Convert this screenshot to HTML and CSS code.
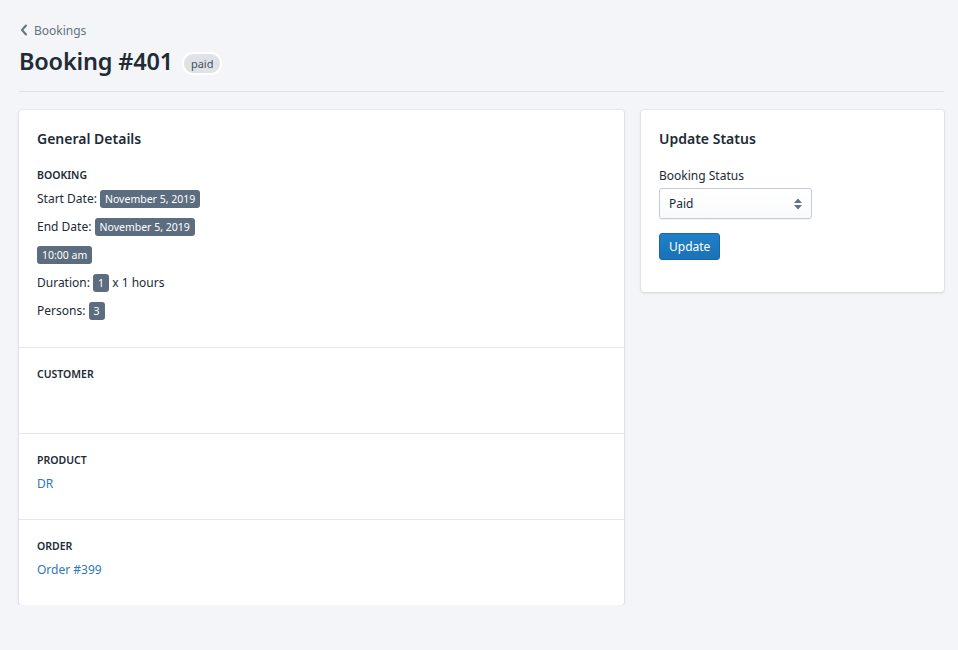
FILE: index.html
```html
<!doctype html>
<html lang="en">

<head>
    <meta charset="UTF-8">
    <title>Booking #401</title>
    <link rel="stylesheet" href="styles.css">
</head>

<body>
    <div class="page">
        <div class="header">
            <a class="crumb" href="#">
                <svg width="8" height="12" viewBox="0 0 8 12"><path d="M6 1.5 L2 6 L6 10.5" fill="none" stroke="#637381" stroke-width="2" stroke-linecap="round" stroke-linejoin="round"/></svg>
                <span>Bookings</span>
            </a>
            <div class="title-row">
                <h1>Booking #401</h1>
                <span class="badge">paid</span>
            </div>
        </div>

        <div class="layout">
            <div class="card main">
                <div class="section">
                    <h2>General Details</h2>
                    <h3>BOOKING</h3>
                    <div class="row">Start Date: <span class="tag">November 5, 2019</span></div>
                    <div class="row">End Date: <span class="tag">November 5, 2019</span></div>
                    <div class="row"><span class="tag">10:00 am</span></div>
                    <div class="row">Duration: <span class="tag">1</span> x 1 hours</div>
                    <div class="row">Persons: <span class="tag">3</span></div>
                </div>
                <div class="section">
                    <h3>CUSTOMER</h3>
                    <div class="blank"></div>
                </div>
                <div class="section">
                    <h3>PRODUCT</h3>
                    <a class="link" href="#">DR</a>
                </div>
                <div class="section">
                    <h3>ORDER</h3>
                    <a class="link" href="#">Order #399</a>
                </div>
            </div>

            <div class="card side">
                <div class="section">
                    <h2>Update Status</h2>
                    <label class="label">Booking Status</label>
                    <div class="select">
                        <span>Paid</span>
                        <svg width="10" height="14" viewBox="0 0 10 14"><path d="M5 1.5 L9 6 L1 6 Z M5 12.5 L9 8 L1 8 Z" fill="#637381"/></svg>
                    </div>
                    <button class="btn">Update</button>
                </div>
            </div>
        </div>
    </div>
</body>

</html>
```

FILE: styles.css
```css
* {
    margin: 0;
    padding: 0;
    box-sizing: border-box;
}

html,
body {
    background: #f4f5f8;
}

body {
    font-family: "Noto Sans", "Open Sans", sans-serif;
    font-size: 12px;
    color: #212b36;
}

a {
    text-decoration: none;
}

.page {
    padding: 20px 14px 0 19px;
}

.header {
    padding-bottom: 14px;
    border-bottom: 1px solid #dfe3e8;
}

.crumb {
    display: flex;
    align-items: center;
    gap: 6px;
    color: #637381;
    font-size: 12px;
    height: 20px;
    padding-left: 1px;
}

.title-row {
    display: flex;
    align-items: center;
    gap: 9px;
    margin-top: 5px;
}

h1 {
    font-size: 23.5px;
    font-weight: 600;
    line-height: 32px;
    letter-spacing: -0.2px;
}

.badge {
    display: inline-block;
    background: #dfe3e8;
    color: #454f5b;
    font-size: 11px;
    line-height: 17px;
    padding: 1px 7px;
    border-radius: 11px;
    border: 2px solid #fff;
    margin-top: 4px;
}

.layout {
    display: flex;
    align-items: flex-start;
    gap: 17px;
    margin-top: 18px;
}

.card {
    background: #fff;
    border-radius: 3px;
    box-shadow: 0 0 0 1px rgba(63, 63, 68, 0.05), 0 1px 3px 0 rgba(63, 63, 68, 0.15);
}

.main {
    width: 605px;
}

.side {
    width: 303px;
}

.section {
    padding: 18px 18px 20px;
    border-top: 1px solid #e4e7eb;
}

.section:first-child {
    border-top: none;
}

.main .section {
    min-height: 86px;
}

.main .section:first-child {
    padding-bottom: 22px;
}

h2 {
    font-size: 14px;
    font-weight: 600;
    line-height: 22px;
    margin-bottom: 17px;
}

h3 {
    font-size: 10.5px;
    font-weight: 600;
    line-height: 16px;
    text-transform: uppercase;
    margin-bottom: 6px;
}

.section:first-child h3 {
    margin-bottom: 2px;
}

.row {
    line-height: 28px;
    height: 28px;
}

.tag {
    display: inline-block;
    background: #5c6d80;
    color: #fff;
    font-size: 10.5px;
    line-height: 18px;
    padding: 0 5px;
    border-radius: 3px;
    vertical-align: middle;
    margin-top: -2px;
}

.blank {
    height: 20px;
}

.link {
    color: #2a7ab7;
    font-size: 12px;
    line-height: 20px;
}

.label {
    display: block;
    font-size: 12px;
    line-height: 18px;
    margin-bottom: 3px;
}

.select {
    display: flex;
    align-items: center;
    justify-content: space-between;
    width: 153px;
    height: 31px;
    padding: 0 8px 0 9px;
    border: 1px solid #c4cdd5;
    border-radius: 3px;
    background: linear-gradient(#fff, #f9fafb);
    box-shadow: 0 1px 0 rgba(22, 29, 37, 0.05);
    font-size: 12px;
}

.btn {
    display: block;
    margin-top: 14px;
    margin-bottom: 12px;
    height: 27px;
    padding: 0 9px;
    border: 1px solid #1568a8;
    border-radius: 3px;
    background: linear-gradient(#2080c8, #1a72b6);
    color: #fff;
    font-family: inherit;
    font-size: 12px;
}
```
